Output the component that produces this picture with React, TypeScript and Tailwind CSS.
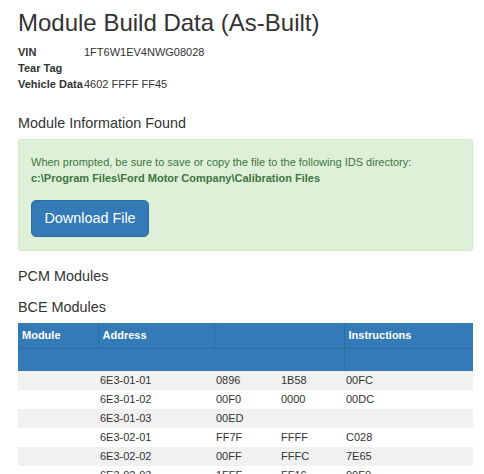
const rows: string[][] = [
  ["6E3-01-01", "0896", "1B58", "00FC"],
  ["6E3-01-02", "00F0", "0000", "00DC"],
  ["6E3-01-03", "00ED", "", ""],
  ["6E3-02-01", "FF7F", "FFFF", "C028"],
  ["6E3-02-02", "00FF", "FFFC", "7E65"],
  ["6E3-02-03", "1FFF", "FF16", "00F0"],
];

const details = [
  { label: "VIN", value: "1FT6W1EV4NWG08028" },
  { label: "Tear Tag", value: "" },
  { label: "Vehicle Data", value: "4602 FFFF FF45" },
];

export default function App() {
  return (
    <div className="h-[474px] overflow-hidden bg-white pl-[18px] pr-[11px] text-[#333] font-['Liberation_Sans',Arial,sans-serif]">
      <h1 className="pt-[10px] text-[24px] leading-[26px] font-normal">
        Module Build Data (As-Built)
      </h1>

      {/* vehicle details */}
      <dl className="mt-[9px] text-[11px] leading-[15.75px]">
        {details.map((d) => (
          <div key={d.label} className="flex">
            <dt className="w-[65px] shrink-0 whitespace-nowrap font-bold">{d.label}</dt>
            <dd className="pl-[1px]">{d.value}</dd>
          </div>
        ))}
      </dl>

      <h4 className="mt-[23px] text-[14.4px] leading-[16px]">Module Information Found</h4>

      <div className="mt-[8px] rounded-[3px] border border-[#d6e9c6] bg-[#dff0d8] px-[12px] pt-[14.5px] pb-[13px] text-[11px] leading-[15.75px] text-[#3c763d]">
        <p>When prompted, be sure to save or copy the file to the following IDS directory:</p>
        <p className="font-bold">c:\Program Files\Ford Motor Company\Calibration Files</p>
        <button
          type="button"
          className="mt-[14px] flex h-[37px] w-[118px] items-center justify-center rounded-[5px] border border-[#2e6da4] bg-[#337ab7] text-[14.4px] text-white"
        >
          Download File
        </button>
      </div>

      <h4 className="mt-[17px] text-[14.4px] leading-[16px]">PCM Modules</h4>
      <h4 className="mt-[15px] text-[14.4px] leading-[16px]">BCE Modules</h4>

      <table className="mt-[8px] w-[455px] table-fixed border-collapse text-[11px] leading-[15.75px]">
        <colgroup>
          <col className="w-[80px]" />
          <col className="w-[116px]" />
          <col className="w-[65px]" />
          <col className="w-[65px]" />
          <col className="w-[129px]" />
        </colgroup>
        <thead className="bg-[#337ab7] text-left font-bold text-white">
          <tr className="h-[25px]">
            <th className="border-r border-b border-[#2d6ca5] px-[4px]">Module</th>
            <th className="border-r border-b border-[#2d6ca5] px-[4px]">Address</th>
            <th colSpan={2} className="border-r border-b border-[#2d6ca5] px-[4px]"></th>
            <th className="border-b border-[#2d6ca5] px-[4px]">Instructions</th>
          </tr>
          <tr className="h-[23px]">
            <th colSpan={4} className="border-r border-[#2d6ca5]"></th>
            <th></th>
          </tr>
        </thead>
        <tbody>
          {rows.map((r, i) => (
            <tr key={r[0]} className={i % 2 === 0 ? "h-[19px] bg-[#f1f1f1]" : "h-[19px] bg-white"}>
              <td className="px-[2px]"></td>
              {r.map((c, j) => (
                <td key={j} className="px-[2px]">
                  {c}
                </td>
              ))}
            </tr>
          ))}
        </tbody>
      </table>
    </div>
  );
}
